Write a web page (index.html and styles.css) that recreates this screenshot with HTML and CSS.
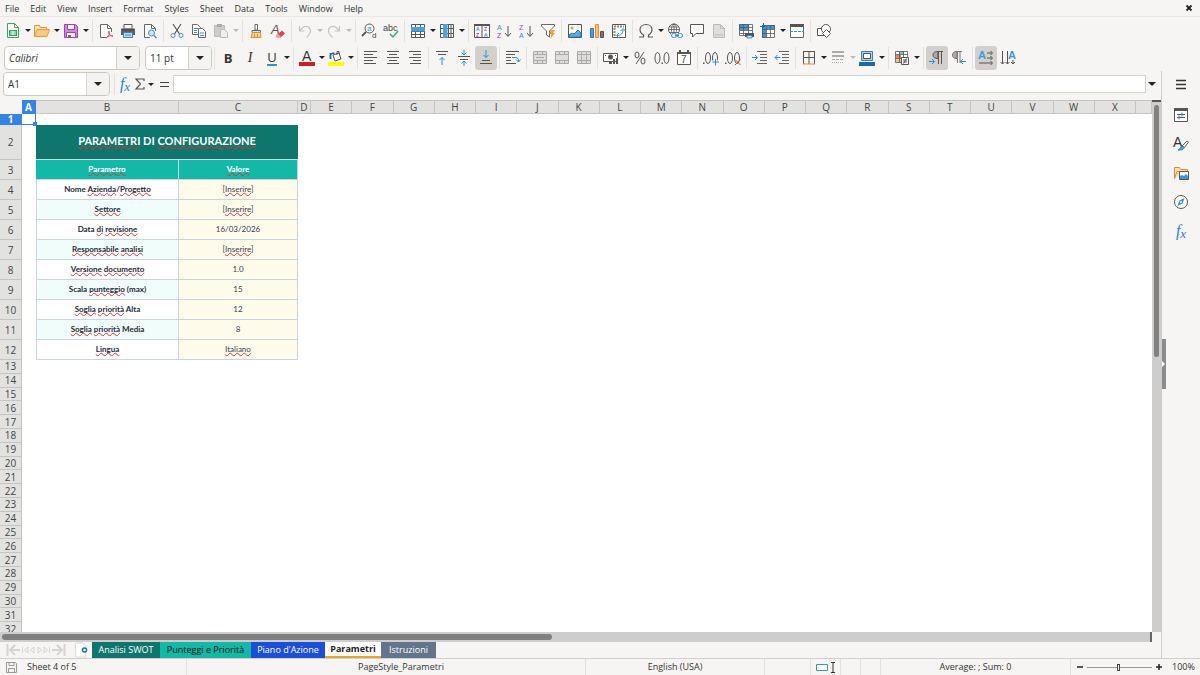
FILE: index.html
```html
<!DOCTYPE html>
<html lang="it">

<head>
    <meta charset="UTF-8">
    <meta name="viewport" content="width=device-width, initial-scale=1.0">
    <title>Parametri</title>
    <link rel="stylesheet" href="styles.css">
</head>

<body>
    <nav class="menubar">
        <button>File</button>
        <button>Edit</button>
        <button>View</button>
        <button>Insert</button>
        <button>Format</button>
        <button>Styles</button>
        <button>Sheet</button>
        <button>Data</button>
        <button>Tools</button>
        <button>Window</button>
        <button>Help</button>
        <button class="close" aria-label="Close"><svg width="8" height="8" viewBox="0 0 8 8"><path d="M1.500 1.500L6.500 6.500M6.500 1.500L1.500 6.500" stroke="#222" stroke-width="1.800"/></svg></button>
    </nav>

    <!-- Standard toolbar -->
    <div class="toolbar">
        <button class="tool" aria-label="New"><svg viewBox="0 0 16 16"><path d="M2.500.500h7l4 4v10h-11z" fill="#fff" stroke="#4a9b5f"/><path d="M9.500.500v4h4" fill="none" stroke="#4a9b5f"/><path d="M4 7h8v6H4z" fill="#2fa35b"/><path d="M5 9h6M5 11h6M8 8v4" stroke="#fff"/></svg></button>
        <button class="arrow" aria-label="New options"></button>
        <button class="tool" aria-label="Open"><svg viewBox="0 0 16 16"><path d="M.5 13.500v-11h5l1 2h6v2" fill="#fbe3b8" stroke="#e0953a"/><path d="M.5 13.500l2.500-7h12.500l-2.500 7z" fill="#f9c983" stroke="#e69a3e"/></svg></button>
        <button class="arrow" aria-label="Open options"></button>
        <button class="tool" aria-label="Save"><svg viewBox="0 0 16 16"><path d="M1.500 1.500h11l2 2v11h-13z" fill="#cf8ade" stroke="#9a45b0"/><path d="M4.500 1.500h7v5h-7zM3.500 9.500h9v5h-9z" fill="#fff" stroke="#9a45b0"/><path d="M5 12h3v2H5z" fill="#9a45b0"/></svg></button>
        <button class="arrow" aria-label="Save options"></button>
        <span class="sep"></span>
        <button class="tool" aria-label="Export as PDF"><svg viewBox="0 0 16 16"><path d="M9 14.500H2.500v-13h7l4 4V9" fill="#fff" stroke="#666"/><path d="M9.500 1.500v4h4" fill="none" stroke="#666"/><path d="M8 15c3-2 4-5 3-7-1 1 0 5 4 5-2-1-5 0-7 2z" fill="none" stroke="#e2485c"/></svg></button>
        <button class="tool" aria-label="Print"><svg viewBox="0 0 16 16"><path d="M4 1.500h8V6H4z" fill="#fff" stroke="#555"/><path d="M1 5.500h14v6.500H1z" fill="#5c6266"/><path d="M2 7h12" stroke="#444"/><path d="M3.500 9.500h9v5h-9z" fill="#bfe0f7" stroke="#357fbd"/><path d="M5 12h6" stroke="#357fbd"/></svg></button>
        <button class="tool" aria-label="Print preview"><svg viewBox="0 0 16 16"><path d="M8 14.500H2.500v-13h7l4 4V8" fill="#fff" stroke="#666"/><path d="M9.500 1.500v4h4" fill="none" stroke="#666"/><circle cx="9.500" cy="10" r="3" fill="#cfe7fa" stroke="#3b8fd4"/><path d="M12 12.500l2.500 2.500" stroke="#3b8fd4" stroke-width="1.500"/></svg></button>
        <span class="sep"></span>
        <button class="tool" aria-label="Cut"><svg viewBox="0 0 16 16"><path d="M4 1l6.500 10M12 1L5.500 11" stroke="#555" stroke-width="1.200"/><circle cx="4" cy="12.500" r="2" fill="#fff" stroke="#3b8fd4"/><circle cx="12" cy="12.500" r="2" fill="#fff" stroke="#3b8fd4"/></svg></button>
        <button class="tool" aria-label="Copy"><svg viewBox="0 0 16 16"><path d="M1.500 1.500h5l3 3v7h-8z" fill="#fff" stroke="#666"/><path d="M3 5.500h4M3 7.500h3M3 9.500h3" stroke="#3b8fd4"/><path d="M7.500 5.500h4l3 3v6h-7z" fill="#fff" stroke="#666"/><path d="M9 10h4M9 12.500h4" stroke="#3b8fd4"/></svg></button>
        <button class="tool" aria-label="Paste" disabled><svg viewBox="0 0 16 16"><path d="M1.500 2.500h10v11h-10z" fill="#ccc" stroke="#bbb"/><path d="M4 1h5v3H4z" fill="#aaa"/><path d="M7.500 6.500h4l3 3v5h-7z" fill="#eee" stroke="#bbb"/></svg></button>
        <button class="arrow dim" aria-label="Paste options" disabled></button>
        <span class="sep"></span>
        <button class="tool" aria-label="Clone formatting"><svg viewBox="0 0 16 16"><path d="M7 1.500h2.500V7H7z" fill="#fff" stroke="#666"/><path d="M4 7.500h8.500v2H4z" fill="#ddd" stroke="#666"/><path d="M4.500 9.500h8l.5 5H3z" fill="#fbd49c" stroke="#e08b2c"/><path d="M6.500 11v3M9.500 11v3" stroke="#e08b2c"/></svg></button>
        <button class="tool" aria-label="Clear formatting"><svg viewBox="0 0 16 16"><text x="1" y="11" font-size="13" font-style="italic" fill="#555">A</text><path d="M6 12.500l6-5 3 3-5 4.500H7z" fill="#e0444f"/><path d="M6 12.500l2-1.500 3 3-1 1H7z" fill="#f6a3a8"/></svg></button>
        <span class="sep"></span>
        <button class="tool" aria-label="Undo" disabled><svg viewBox="0 0 16 16"><path d="M2.500 3v5h5M2.500 8L6 4.500C9 2 13.500 4 13.500 8c0 2-1.500 4-4 6.500" fill="none" stroke="#c4c4c4" stroke-width="1.200"/></svg></button>
        <button class="arrow dim" aria-label="Undo steps" disabled></button>
        <button class="tool" aria-label="Redo" disabled><svg viewBox="0 0 16 16"><path d="M13.500 3v5h-5M13.500 8L10 4.500C7 2 2.500 4 2.500 8c0 2 1.500 4 4 6.500" fill="none" stroke="#c4c4c4" stroke-width="1.200"/></svg></button>
        <button class="arrow dim" aria-label="Redo steps" disabled></button>
        <span class="sep"></span>
        <button class="tool" aria-label="Find and replace"><svg viewBox="0 0 16 16"><circle cx="8.500" cy="5.500" r="4.500" fill="#fff" stroke="#555"/><path d="M5 9l-4 4" stroke="#555" stroke-width="1.800"/><text x="6" y="8" font-size="8" fill="#2b8fd8">a</text><text x="11" y="15" font-size="8" fill="#444">d</text></svg></button>
        <button class="tool" aria-label="Spelling"><svg viewBox="0 0 16 16"><text x="0" y="8" font-size="9" fill="#444">abc</text><path d="M7 11l3 3 5-6" fill="none" stroke="#3fae6a" stroke-width="1.500"/></svg></button>
        <span class="sep"></span>
        <button class="tool" aria-label="Row"><svg viewBox="0 0 16 16"><path d="M1.500 1.500h13v13h-13z" fill="#fff"/><path d="M1.500 1.500h13v13h-13zM1.500 4.500h13M1.500 8.500h13M1.500 11.500h13M5.500 1.500v13M10.500 1.500v13" fill="none" stroke="#555"/><path d="M1 4h14v4.500H1z" fill="#4aa3e0"/></svg></button>
        <button class="arrow" aria-label="Row options"></button>
        <button class="tool" aria-label="Column"><svg viewBox="0 0 16 16"><path d="M1.500 1.500h13v13h-13z" fill="#fff"/><path d="M1.500 1.500h13v13h-13zM1.500 5.500h13M1.500 10.500h13M5.500 1.500v13M9.500 1.500v13M12 1.500v13" fill="none" stroke="#555"/><path d="M4 1h4.500v14H4z" fill="#4aa3e0"/></svg></button>
        <button class="arrow" aria-label="Column options"></button>
        <span class="sep"></span>
        <button class="tool" aria-label="Sort"><svg viewBox="0 0 16 16"><path d="M.5 1.500h15v13H.5zM8 2v12" fill="#fff" stroke="#555"/><path d="M0 1h16v2H0z" fill="#555"/><g font-size="5" font-weight="bold"><text x="2" y="8" fill="#2b8fd8">A</text><text x="2" y="14" fill="#a83fc0">Z</text><text x="10" y="8" fill="#a83fc0">Z</text><text x="10" y="14" fill="#2b8fd8">A</text></g></svg></button>
        <button class="tool" aria-label="Sort ascending"><svg viewBox="0 0 16 16"><text x="1" y="7" font-size="7" fill="#2b8fd8">A</text><text x="1" y="15" font-size="7" fill="#a83fc0">Z</text><path d="M12 3v10M9 10l3 3.500 3-3.500" fill="none" stroke="#555"/></svg></button>
        <button class="tool" aria-label="Sort descending"><svg viewBox="0 0 16 16"><text x="1" y="7" font-size="7" fill="#a83fc0">Z</text><text x="1" y="15" font-size="7" fill="#2b8fd8">A</text><path d="M12 3v10M9 10l3 3.500 3-3.500" fill="none" stroke="#555"/></svg></button>
        <button class="tool" aria-label="AutoFilter"><svg viewBox="0 0 16 16"><path d="M1.500 1.500h13v1.500L9.500 8v6l-3-2V8l-5-5z" fill="#fff" stroke="#666"/><path d="M11 7h4l-2 3h2l-5 6 1.500-5H9z" fill="#f09a36"/></svg></button>
        <span class="sep"></span>
        <button class="tool" aria-label="Insert image"><svg viewBox="0 0 16 16"><path d="M1.500 1.500h13v13h-13z" fill="#fff" stroke="#555"/><circle cx="5" cy="5" r="1.500" fill="#f09a36"/><path d="M2 14v-2l3-2 2 1 4-4 3 3v4z" fill="#5aaae6" stroke="#2b77b8"/></svg></button>
        <button class="tool" aria-label="Insert chart"><svg viewBox="0 0 16 16"><path d="M1.500 5.500h3v9h-3z" fill="#4aa3e0" stroke="#2b77b8"/><path d="M6.500 1.500h3v13h-3z" fill="#fbc47c" stroke="#e08b2c"/><path d="M11.500 8.500h3v6h-3z" fill="#777" stroke="#555"/></svg></button>
        <button class="tool" aria-label="Pivot table"><svg viewBox="0 0 16 16"><path d="M1.500 1.500h13v13h-13z" fill="#fff" stroke="#555"/><path d="M3 3.500h10M3.500 5v8" stroke="#888" stroke-width="2" stroke-dasharray="2 1"/><path d="M6 12.500c4 0 6-2 6-6M8 10l-2.500 2.500L8 15M9.500 8L12 5.500 14.500 8" fill="none" stroke="#2b8fd8"/></svg></button>
        <span class="sep"></span>
        <button class="tool" aria-label="Special character"><svg viewBox="0 0 16 16"><path d="M1 14h4.500v-2C3 10.500 2 8.500 2 6.500 2 3.500 4.500 1.500 8 1.500s6 2 6 5c0 2-1 4-3.500 5.500v2H15" fill="none" stroke="#555" stroke-width="1.200"/></svg></button>
        <button class="arrow" aria-label="Character list"></button>
        <button class="tool" aria-label="Hyperlink"><svg viewBox="0 0 16 16"><circle cx="7" cy="6.500" r="5.500" fill="#fff" stroke="#555"/><path d="M7 1v11M1.500 6.500h11M2.500 4h9M2.500 9.500h9" stroke="#555" stroke-width=".8"/><ellipse cx="7" cy="6.500" rx="2.500" ry="5.500" fill="none" stroke="#555" stroke-width=".8"/><path d="M4 10h12v5H4z" fill="#f6f5f4"/><rect x="4.500" y="10.500" width="5" height="4" rx="2" fill="none" stroke="#2b8fd8"/><rect x="10.500" y="10.500" width="5" height="4" rx="2" fill="none" stroke="#2b8fd8"/><path d="M8 12.500h4" stroke="#2b8fd8"/></svg></button>
        <button class="tool" aria-label="Comment"><svg viewBox="0 0 16 16"><path d="M1.500 1.500h13v9H7L3.500 14v-3.500h-2z" fill="#fff" stroke="#555"/></svg></button>
        <button class="tool" aria-label="Headers and footers" disabled><svg viewBox="0 0 16 16"><path d="M2.500 1.500h7l4 4v9h-11z" fill="#ddd" stroke="#bbb"/><path d="M9.500 1.500v4h4M4 12h8" fill="none" stroke="#bbb"/></svg></button>
        <span class="sep"></span>
        <button class="tool" aria-label="Define print area"><svg viewBox="0 0 16 16"><path d="M1.500 1.500h13v11h-13z" fill="#fff"/><path d="M1 1h10v6H1z" fill="#3f95d8"/><path d="M1.500 1.500h13v11h-13zM1.500 4.500h13M1.500 7.500h13M1.500 10.500h13M5.500 1.500v11M10.500 1.500v11" fill="none" stroke="#555" stroke-width=".8"/><path d="M7 10h9v4H7z" fill="#555"/><path d="M9 12.500h5V15H9z" fill="#cfe7fa" stroke="#357fbd" stroke-width=".8"/></svg></button>
        <button class="tool" aria-label="Freeze rows and columns"><svg viewBox="0 0 16 16"><path d="M2.500 2.500h12v12h-12z" fill="#fff"/><path d="M2 2h13v4H2zM2 2h4v13H2z" fill="#3f95d8"/><path d="M2.500 2.500h12v12h-12zM6.500 2.500v12M10.500 2.500v12M2.500 6.500h12M2.500 10.500h12" fill="none" stroke="#555" stroke-width=".8"/><path d="M3.500 0v5M0 3.500h5" stroke="#2067a8"/></svg></button>
        <button class="arrow" aria-label="Freeze options"></button>
        <button class="tool" aria-label="Split window"><svg viewBox="0 0 16 16"><path d="M1.500 2.500h13v12h-13z" fill="#fff" stroke="#666"/><path d="M1 1h14v3H1z" fill="#555"/><path d="M1 8.500h14" stroke="#2b8fd8" stroke-dasharray="3 1"/></svg></button>
        <span class="sep"></span>
        <button class="tool" aria-label="Draw functions"><svg viewBox="0 0 16 16"><path d="M1.500 5.500h7v7h-7z" fill="#fff" stroke="#555"/><circle cx="10" cy="6" r="4.500" fill="#fff" stroke="#555"/><path d="M10.500 6.500l4 4-4 4-4-4z" fill="#fff" stroke="#555"/></svg></button>
    </div>

    <!-- Formatting toolbar -->
    <div class="toolbar">
        <div class="combo font-name">
            <input type="text" value="Calibri" aria-label="Font name">
            <button aria-label="Font list"></button>
        </div>
        <div class="combo font-size">
            <input type="text" value="11 pt" aria-label="Font size">
            <button aria-label="Size list"></button>
        </div>
        <span class="sep"></span>
        <button class="tool letter"><b>B</b></button>
        <button class="tool letter serif"><i>I</i></button>
        <button class="tool letter underlined"><span>U</span></button>
        <button class="arrow" aria-label="Underline options"></button>
        <span class="sep"></span>
        <button class="tool" aria-label="Font color"><svg viewBox="0 0 16 16"><text x="3" y="11" font-size="14" fill="#333">A</text><path d="M0 12h16v4H0z" fill="#c9211e"/></svg></button>
        <button class="arrow" aria-label="Font color options"></button>
        <button class="tool" aria-label="Background color"><svg viewBox="0 0 16 16"><path d="M5 5l6-2 2 6-6 2z" fill="#fff" stroke="#555"/><path d="M9 5V1.500h2V4" fill="none" stroke="#555"/><path d="M2.500 9V4l4-1" fill="none" stroke="#2067a8" stroke-width="1.800"/><path d="M0 12h16v4H0z" fill="#ff0"/></svg></button>
        <button class="arrow" aria-label="Background color options"></button>
        <span class="sep"></span>
        <button class="tool" aria-label="Align left"><svg viewBox="0 0 16 16"><path d="M1 1.500h13M1 4.500h9M1 7.500h13M1 10.500h9M1 13.500h12" stroke="#555"/></svg></button>
        <button class="tool" aria-label="Align center"><svg viewBox="0 0 16 16"><path d="M2 1.500h12M4 4.500h8M2 7.500h12M4 10.500h8M2 13.500h12" stroke="#555"/></svg></button>
        <button class="tool" aria-label="Align right"><svg viewBox="0 0 16 16"><path d="M2 1.500h12M6 4.500h8M2 7.500h12M6 10.500h8M3 13.500h11" stroke="#555"/></svg></button>
        <span class="sep"></span>
        <button class="tool" aria-label="Align top"><svg viewBox="0 0 16 16"><path d="M2 1.500h12M4 4.500h8" stroke="#555"/><path d="M8 15V7.500M5.500 10L8 7.500l2.500 2.500" fill="none" stroke="#2b8fd8"/></svg></button>
        <button class="tool" aria-label="Center vertically"><svg viewBox="0 0 16 16"><path d="M2 6.500h12M4 9.500h8" stroke="#555"/><path d="M8 0v5M5.500 2.500L8 5l2.500-2.500M8 16v-5M5.500 13.500L8 11l2.500 2.500" fill="none" stroke="#2b8fd8"/></svg></button>
        <button class="tool active" aria-label="Align bottom"><svg viewBox="0 0 16 16"><path d="M4 10.500h8M2 13.500h12" stroke="#555"/><path d="M8 0v7.500M5.500 5L8 7.500 10.500 5" fill="none" stroke="#2b8fd8"/></svg></button>
        <span class="sep"></span>
        <button class="tool" aria-label="Wrap text"><svg viewBox="0 0 16 16"><path d="M1 1.500h13M1 4.500h9M1 7.500h5M1 10.500h5M1 13.500h10" stroke="#555"/><path d="M7 7.500h3.500c2 0 3 1 3 3.500M11 9.500l2.500 2.500L15.500 9.500" fill="none" stroke="#2b8fd8"/></svg></button>
        <span class="sep"></span>
        <button class="tool" aria-label="Merge and center" disabled><svg viewBox="0 0 16 16"><path d="M1.500 1.500h13v12h-13zM1.500 4.500h13M1.500 10.500h13M5.500 1.500v3M10.500 1.500v3M5.500 10.500v3M10.500 10.500v3M4 7.500h8" fill="#ddd" stroke="#aaa"/></svg></button>
        <button class="tool" aria-label="Merge cells" disabled><svg viewBox="0 0 16 16"><path d="M1.500 1.500h13v12h-13zM1.500 4.500h13M1.500 10.500h13M5.500 1.500v3M10.500 1.500v3M5.500 10.500v3M10.500 10.500v3" fill="#ddd" stroke="#aaa"/></svg></button>
        <button class="tool" aria-label="Unmerge cells" disabled><svg viewBox="0 0 16 16"><path d="M1.500 1.500h13v12h-13zM1.500 4.500h13M1.500 10.500h13M5.500 1.500v12M10.500 1.500v12" fill="#ddd" stroke="#aaa"/></svg></button>
        <span class="sep"></span>
        <button class="tool" aria-label="Currency"><svg viewBox="0 0 16 16"><path d="M.5 3.500h14v8H.5z" fill="#fff" stroke="#555"/><circle cx="7.500" cy="7" r="2.500" fill="#555"/><path d="M6 11h3v3H6zM10 9h2v5h-2zM13 8h2v6h-2z" fill="#555"/><path d="M2 5.500h1M12 5.500h1" stroke="#555"/></svg></button>
        <button class="arrow" aria-label="Currency options"></button>
        <button class="tool" aria-label="Percent"><svg viewBox="0 0 16 16"><ellipse cx="5" cy="5" rx="2" ry="3" fill="none" stroke="#555"/><ellipse cx="11" cy="11" rx="2" ry="3" fill="none" stroke="#555"/><path d="M12 2L4 14" stroke="#555"/></svg></button>
        <button class="tool" aria-label="Number"><svg viewBox="0 0 16 16"><ellipse cx="3.500" cy="8" rx="2.500" ry="5.500" fill="none" stroke="#555"/><ellipse cx="12.500" cy="8" rx="2.500" ry="5.500" fill="none" stroke="#555"/><path d="M7.500 12.500h1.500v1.500H7.500z" fill="#555"/></svg></button>
        <button class="tool" aria-label="Date"><svg viewBox="0 0 16 16"><path d="M1.500 2.500h13v12h-13z" fill="#fff" stroke="#555"/><path d="M1 2h14v2H1zM3 0h2v3H3zM11 0h2v3h-2z" fill="#555"/><text x="5" y="13" font-size="10" fill="#444">7</text></svg></button>
        <span class="sep"></span>
        <button class="tool" aria-label="Add decimal place"><svg viewBox="0 0 16 16"><path d="M0 12.500h1.500V14H0z" fill="#555"/><ellipse cx="5" cy="8" rx="2.500" ry="5.500" fill="none" stroke="#555"/><ellipse cx="12" cy="8" rx="2.500" ry="5.500" fill="none" stroke="#555"/><path d="M9 12h7M12.500 8.500v7" stroke="#f6f5f4" stroke-width="3"/><path d="M9.500 12h6.500M12.500 9v6.500" stroke="#2b8fd8"/></svg></button>
        <button class="tool" aria-label="Delete decimal place"><svg viewBox="0 0 16 16"><path d="M0 12.500h1.500V14H0z" fill="#555"/><ellipse cx="5" cy="8" rx="2.500" ry="5.500" fill="none" stroke="#555"/><ellipse cx="12" cy="8" rx="2.500" ry="5.500" fill="none" stroke="#555"/><path d="M10 9.500l5.500 5.500M15.500 9.500L10 15" stroke="#e2483c"/></svg></button>
        <span class="sep"></span>
        <button class="tool" aria-label="Increase indent"><svg viewBox="0 0 16 16"><path d="M5 1.500h10M8 4.500h7M8 7.500h7M8 10.500h7M5 13.500h10" stroke="#666"/><path d="M0 7.500h5.500M3 5l2.500 2.500L3 10" fill="none" stroke="#2b8fd8"/></svg></button>
        <button class="tool" aria-label="Decrease indent"><svg viewBox="0 0 16 16"><path d="M5 1.500h10M8 4.500h7M8 7.500h7M8 10.500h7M5 13.500h10" stroke="#666"/><path d="M6.500 7.500H1M3.500 5L1 7.500 3.500 10" fill="none" stroke="#2b8fd8"/></svg></button>
        <span class="sep"></span>
        <button class="tool" aria-label="Borders"><svg viewBox="0 0 16 16"><path d="M2 1.500h12M2.500 2v12M13.500 2v12M8 2v12M2 7.500h12" stroke="#555" fill="none"/><path d="M2 14h12" stroke="#e08b2c"/></svg></button>
        <button class="arrow" aria-label="Border options"></button>
        <button class="tool" aria-label="Border style" disabled><svg viewBox="0 0 16 16"><path d="M2 2h12M2 6h12" stroke="#aaa" stroke-width="2"/><path d="M2 9.500h12" stroke="#aaa" stroke-dasharray="3 1"/><path d="M2 12.500h12" stroke="#aaa" stroke-dasharray="1 1"/></svg></button>
        <button class="arrow dim" aria-label="Border style options" disabled></button>
        <button class="tool" aria-label="Border color"><svg viewBox="0 0 16 16"><path d="M2.500 1.500h11v9h-11z" fill="#a8d0f0" stroke="#357fbd"/><path d="M4.500 3.500h7v5h-7z" fill="#fff" stroke="#555"/><path d="M0 12h16v4H0z" fill="#2067a8"/></svg></button>
        <button class="arrow" aria-label="Border color options"></button>
        <span class="sep"></span>
        <button class="tool" aria-label="Conditional formatting"><svg viewBox="0 0 16 16"><path d="M1.500 1.500h12v11h-12z" fill="#fff"/><path d="M5 1h5v3H5z" fill="#7ccf95"/><path d="M2 5h5v3H2z" fill="#ef7b7b"/><path d="M2 9h5v3H2z" fill="#f9c983"/><path d="M1.500 1.500h12v11h-12zM5.500 1.500v11M9.500 1.500v11M1.500 4.500h12M1.500 8.500h12" fill="none" stroke="#555" stroke-width=".8"/><path d="M7.500 7.500h7v7h-7z" fill="#fff" stroke="#555"/><path d="M9 10h4M9 12h4M12.500 8.500l-3 5" stroke="#555"/></svg></button>
        <button class="arrow" aria-label="Conditional options"></button>
        <span class="sep"></span>
        <button class="tool active" aria-label="Left to right"><svg viewBox="0 0 16 16"><path d="M14 1.500H8.500M9.500 1v13M12.500 1v13" fill="none" stroke="#555"/><path d="M9 1.500C6 1.500 4 2.500 4 5s2 3.500 5 3.500z" fill="#aaa" stroke="#555"/><path d="M0 11.500h5.500M3 9l2.500 2.500L3 14" fill="none" stroke="#2b8fd8"/></svg></button>
        <button class="tool" aria-label="Right to left"><svg viewBox="0 0 16 16"><path d="M11 1.500H5.500M6.500 1v12M9 1v12" fill="none" stroke="#777"/><path d="M6 1.500C3 1.500 1.500 2.500 1.500 5S3 8.500 6 8.500z" fill="#aaa" stroke="#777"/><path d="M15 11.500H9.500M12 9l-2.500 2.500L12 14" fill="none" stroke="#2b8fd8"/></svg></button>
        <span class="sep"></span>
        <button class="tool active" aria-label="Horizontal text"><svg viewBox="0 0 16 16"><text x="0" y="9" font-size="11" font-weight="bold" fill="#3b9bdc">A</text><path d="M9 3h5M9 8h5M1 13h13M12.500 1l2 2-2 2M12.500 6l2 2-2 2M12.500 11l2 2-2 2" fill="none" stroke="#555"/></svg></button>
        <button class="tool" aria-label="Vertical text"><svg viewBox="0 0 16 16"><text x="8" y="9" font-size="11" font-weight="bold" fill="#3b9bdc">A</text><path d="M2.500 1v13M7.500 1v13M13 10v4M.5 12l2 2 2-2M5.500 12l2 2 2-2M11 12l2 2 2-2" fill="none" stroke="#555"/></svg></button>
    </div>

    <div class="workspace">
        <main>
            <div class="formula-bar">
                <div class="combo name-box">
                    <input type="text" value="A1" aria-label="Name box">
                    <button aria-label="Named ranges"></button>
                </div>
                <span class="sep"></span>
                <button class="fx" aria-label="Function wizard">f<sub>x</sub></button>
                <button class="sum" aria-label="Select function"><svg width="10" height="12" viewBox="0 0 10 12"><path d="M9 3V1H1l4.500 5L1 11h8V9" fill="none" stroke="#555" stroke-width="1.200"/></svg></button>
                <button class="arrow" aria-label="Function list"></button>
                <button class="equals" aria-label="Formula"></button>
                <input class="formula" type="text" aria-label="Formula input">
                <button class="arrow expand" aria-label="Expand formula bar"></button>
            </div>

            <div class="sheet-area">
                <div class="sheet">
                    <table>
                        <colgroup>
                            <col class="w-head"><col class="w-a"><col class="w-b"><col class="w-c"><col class="w-d">
                            <col span="20">
                            <col class="w-last">
                        </colgroup>
                        <thead>
                            <tr>
                                <td></td><th class="selected">A</th><th>B</th><th>C</th><th>D</th><th>E</th><th>F</th><th>G</th><th>H</th><th>I</th><th>J</th><th>K</th><th>L</th><th>M</th><th>N</th><th>O</th><th>P</th><th>Q</th><th>R</th><th>S</th><th>T</th><th>U</th><th>V</th><th>W</th><th>X</th><th></th>
                            </tr>
                        </thead>
                        <tbody>
                            <tr class="row-1"><th class="selected">1</th><td class="cursor"></td><td colspan="24"></td></tr>
                            <tr class="row-2"><th>2</th><td></td><td class="title" colspan="2"><u>PARAMETRI</u> DI <u>CONFIGURAZIONE</u></td></tr>
                            <tr class="data head"><th>3</th><td></td><td><u>Parametro</u></td><td><u>Valore</u></td></tr>
                            <tr class="data"><th>4</th><td></td><td class="label">Nome <u>Azienda</u>/<u>Progetto</u></td><td class="value">[<u>Inserire</u>]</td></tr>
                            <tr class="data alt"><th>5</th><td></td><td class="label"><u>Settore</u></td><td class="value">[<u>Inserire</u>]</td></tr>
                            <tr class="data"><th>6</th><td></td><td class="label">Data <u>di</u> <u>revisione</u></td><td class="value">16/03/2026</td></tr>
                            <tr class="data alt"><th>7</th><td></td><td class="label"><u>Responsabile</u> <u>analisi</u></td><td class="value">[<u>Inserire</u>]</td></tr>
                            <tr class="data"><th>8</th><td></td><td class="label"><u>Versione</u> <u>documento</u></td><td class="value">1.0</td></tr>
                            <tr class="data alt"><th>9</th><td></td><td class="label">Scala <u>punteggio</u> (max)</td><td class="value">15</td></tr>
                            <tr class="data"><th>10</th><td></td><td class="label"><u>Soglia</u> <u>priorità</u> Alta</td><td class="value">12</td></tr>
                            <tr class="data alt"><th>11</th><td></td><td class="label"><u>Soglia</u> <u>priorità</u> Media</td><td class="value">8</td></tr>
                            <tr class="data"><th>12</th><td></td><td class="label"><u>Lingua</u></td><td class="value"><u>Italiano</u></td></tr>
                            <tr><th>13</th></tr>
                            <tr><th>14</th></tr>
                            <tr><th>15</th></tr>
                            <tr><th>16</th></tr>
                            <tr><th>17</th></tr>
                            <tr><th>18</th></tr>
                            <tr><th>19</th></tr>
                            <tr><th>20</th></tr>
                            <tr><th>21</th></tr>
                            <tr><th>22</th></tr>
                            <tr><th>23</th></tr>
                            <tr><th>24</th></tr>
                            <tr><th>25</th></tr>
                            <tr><th>26</th></tr>
                            <tr><th>27</th></tr>
                            <tr><th>28</th></tr>
                            <tr><th>29</th></tr>
                            <tr><th>30</th></tr>
                            <tr><th>31</th></tr>
                            <tr><th>32</th></tr>
                        </tbody>
                    </table>
                </div>
                <div class="vscroll"><div class="thumb"></div></div>
            </div>

            <div class="hscroll"><div class="thumb"></div></div>

            <div class="tabs">
                <div class="tab-nav">
                    <button aria-label="First sheet"><svg width="15" height="12" viewBox="0 0 15 12"><path d="M1.500 0v12M9 1L4 6l5 5M4 6h10" fill="none" stroke="#d4d4d4" stroke-width="2"/></svg></button>
                    <button aria-label="Previous sheet"><svg width="15" height="12" viewBox="0 0 15 12"><path d="M1.500 3v6M7 3L3.500 6 7 9zM13 3L9.500 6 13 9z" fill="none" stroke="#d4d4d4"/></svg></button>
                    <button aria-label="Next sheet"><svg width="15" height="12" viewBox="0 0 15 12"><path d="M13.500 3v6M2 3l3.500 3L2 9zM8 3l3.500 3L8 9z" fill="none" stroke="#d4d4d4"/></svg></button>
                    <button aria-label="Last sheet"><svg width="15" height="12" viewBox="0 0 15 12"><path d="M13.500 0v12M6 1l5 5-5 5M11 6H1" fill="none" stroke="#d4d4d4" stroke-width="2"/></svg></button>
                </div>
                <button class="add" aria-label="Add sheet"><svg width="14" height="14" viewBox="0 0 14 14"><path d="M1.500 0h7l3 3v11h-10z" fill="#fff" stroke="#ddd"/><circle cx="10.500" cy="7" r="2" fill="#fff" stroke="#2067a8" stroke-width="1.500"/></svg></button>
                <button class="tab swot">Analisi SWOT</button>
                <button class="tab scores">Punteggi e Priorità</button>
                <button class="tab plan">Piano d'Azione</button>
                <button class="tab current">Parametri</button>
                <button class="tab help">Istruzioni</button>
            </div>
        </main>

        <aside class="sidebar">
            <button class="grip" aria-label="Hide sidebar"></button>
            <button aria-label="Sidebar settings"><svg viewBox="0 0 16 16"><path d="M3 4.500h10M3 8.500h10M3 12.500h10" stroke="#333" stroke-width="1.500"/></svg></button>
            <button aria-label="Properties"><svg viewBox="0 0 16 16"><path d="M1.500 1.500h13v13h-13z" fill="#fff" stroke="#555"/><path d="M1 1h14v3H1z" fill="#555"/><path d="M4 7.500h8M4 10.500h8" stroke="#555"/><path d="M9 5.500v4M6 8.500v4" stroke="#2b8fd8"/></svg></button>
            <button aria-label="Styles"><svg viewBox="0 0 16 16"><text x="0" y="11" font-size="14" fill="#333">A</text><path d="M9 10l5-5 1.500 1-4 5.500z" fill="#fff" stroke="#666"/><path d="M5 14c2 0 2-4 5-3.500 2 1 1 4-5 3.500z" fill="#5aaae6" stroke="#2b77b8"/></svg></button>
            <button aria-label="Gallery"><svg viewBox="0 0 16 16"><path d="M1.500 13.500v-11h5l1 2h7v2M1.500 13.500l2.500-7h11" fill="#fbe3b8" stroke="#e0853a"/><path d="M6.500 6.500h9v8h-9z" fill="#fff" stroke="#555"/><path d="M7 14v-3l2-1 2 1 2-2 2 2v3z" fill="#3f95d8"/></svg></button>
            <button aria-label="Navigator"><svg viewBox="0 0 16 16"><circle cx="8" cy="8" r="6.500" fill="#fff" stroke="#555"/><path d="M11.500 4l-2 5.500L4.500 12l2-5.500z" fill="#2b8fd8"/><circle cx="8" cy="8" r="1" fill="#fff"/></svg></button>
            <button class="fx" aria-label="Functions">f<sub>x</sub></button>
        </aside>
    </div>

    <footer class="statusbar">
        <div class="sheet-count"><svg width="11" height="11" viewBox="0 0 11 11"><path d="M.5.5h9l1 1v9H.5zM3 .5h5v3H3zM2.500 6.500h6v4h-6z" fill="none" stroke="#999"/></svg>Sheet 4 of 5</div>
        <div class="page-style">PageStyle_Parametri</div>
        <div class="language">English (USA)</div>
        <div class="cell-s"></div>
        <div class="cell-m"><svg width="20" height="12" viewBox="0 0 20 12"><path d="M.5 3.500h11v6H.5z" fill="#fff" stroke="#3b8fd4"/><path d="M15 1.500h4M15 11.500h4M17 1.500v10" stroke="#333"/></svg></div>
        <div class="cell-xs"></div>
        <div class="cell-xs"></div>
        <div class="stats">Average: ; Sum: 0</div>
        <div class="zoom">
            <button aria-label="Zoom out"><svg width="8" height="8" viewBox="0 0 8 8"><path d="M1 4h6" stroke="#222" stroke-width="1.500"/></svg></button>
            <input type="range" min="0" max="100" value="48" aria-label="Zoom">
            <button aria-label="Zoom in"><svg width="8" height="8" viewBox="0 0 8 8"><path d="M1 4h6M4 1v6" stroke="#222" stroke-width="1.500"/></svg></button>
            <span>100%</span>
        </div>
    </footer>
</body>

</html>
```

FILE: styles.css
```css
* {
    box-sizing: border-box;
}

body {
    display: flex;
    flex-direction: column;
    height: 100vh;
    margin: 0;
    overflow: hidden;
    background-color: #f6f5f4;
    color: #333;
    font-family: "Open Sans", "Noto Sans", sans-serif;
    font-size: 9px;
}

button,
input {
    margin: 0;
    padding: 0;
    border: none;
    background: none;
    color: inherit;
    font: inherit;
    white-space: nowrap;
}

svg {
    display: block;
    overflow: visible;
    font-family: "Liberation Sans", sans-serif;
}

/* Menu */
.menubar {
    display: flex;
    align-items: center;
    gap: 11px;
    height: 17px;
    padding: 0 5px;
    border-bottom: 1px solid #e8e7e6;
}

.close {
    margin-left: auto;
    padding-right: 2px;
}

/* Toolbars */
.toolbar {
    display: flex;
    align-items: center;
    height: 27px;
    padding-left: 2px;
}

.toolbar .combo {
    margin-left: 2px;
}

.tool {
    display: flex;
    align-items: center;
    justify-content: center;
    width: 22px;
    height: 24px;
    border-radius: 3px;
}

.tool svg,
.sidebar svg {
    width: 16px;
    height: 16px;
}

.tool.active {
    background-color: #d3d0cc;
}

.letter {
    font-size: 13px;
}

.serif {
    font-family: "Liberation Serif", serif;
    font-size: 14px;
}

.underlined span {
    line-height: 14px;
    border-bottom: 2px solid #3b8fd4;
}

.arrow {
    display: flex;
    align-items: center;
    justify-content: center;
    width: 7px;
    height: 24px;
}

.arrow::before,
.combo button::before {
    content: "";
    border: 3px solid transparent;
    border-top-color: #222;
    border-bottom: none;
}

.arrow.dim::before {
    border-top-color: #bbb;
}

.combo button::before,
.expand::before {
    border-width: 4px;
    border-bottom: none;
}

.sep {
    width: 1px;
    height: 22px;
    margin: 0 2px;
    background-color: #e2e1df;
}

.arrow + .sep {
    margin-left: 3px;
}

.combo {
    display: flex;
    height: 24px;
    border: 1px solid #cdc7c2;
    border-radius: 4px;
    background-color: #fff;
    overflow: hidden;
}

.combo input {
    flex: 1;
    min-width: 0;
    padding-left: 4px;
    font-size: 10px;
}

.combo button {
    display: flex;
    align-items: center;
    justify-content: center;
    width: 23px;
    border-left: 1px solid #d8d4d0;
    background-color: #f4f3f2;
}

.font-name {
    width: 136px;
}

.font-name input {
    font-style: italic;
}

.toolbar .font-size {
    width: 67px;
    margin-left: 5px;
}

/* Workspace */
.workspace {
    display: flex;
    flex: 1;
    min-height: 0;
}

main {
    display: flex;
    flex: 1;
    flex-direction: column;
    min-width: 0;
}

.formula-bar {
    display: flex;
    align-items: center;
    height: 29px;
    padding: 0 3px 3px;
}

.name-box {
    width: 107px;
    margin-right: 2px;
}

.fx {
    color: #2b83cc;
    font-family: "Liberation Serif", serif;
    font-size: 16px;
    font-style: italic;
    line-height: 16px;
}

.fx sub {
    font-size: 13px;
    line-height: 0;
    vertical-align: -2px;
}

.formula-bar .fx {
    width: 16px;
}

.sum {
    width: 14px;
    padding-left: 2px;
}

.equals {
    width: 9px;
    height: 5px;
    margin: 0 4px 0 6px;
    border: solid #444;
    border-width: 1px 0;
}

.formula {
    flex: 1;
    height: 18px;
    border: 1px solid #d5d1cd;
    background-color: #fff;
}

.expand {
    width: 12px;
}

.sheet-area {
    display: flex;
    flex: 1;
    min-height: 0;
}

.sheet {
    flex: 1;
    overflow: hidden;
    background-color: #fff;
}

table {
    width: 100%;
    height: calc(100% + 4px);
    table-layout: fixed;
    border-collapse: separate;
    border-spacing: 0;
}

.w-head {
    width: 22px;
}

.w-a {
    width: 14px;
}

.w-b {
    width: 143px;
}

.w-c {
    width: 119px;
}

.w-d {
    width: 13px;
}

.w-last {
    width: 16px;
}

th,
td {
    padding: 0;
    text-align: center;
    white-space: nowrap;
    line-height: 12px;
}

th {
    border-right: 1px solid #c4c4c3;
    border-bottom: 1px solid #c4c4c3;
    background-color: #e2e2e1;
    color: #444;
    font-size: 10px;
    font-weight: normal;
}

thead tr {
    height: 14px;
}

thead th {
    border-top: 1px solid #c4c4c3;
}

thead td {
    background-color: #f6f5f4;
}

th.selected {
    border-color: #3584e4;
    background-color: #3584e4;
    color: #fff;
    font-weight: bold;
}

.row-1 {
    height: 11px;
}

.row-1 th {
    line-height: 10px;
}

.row-2 {
    height: 35px;
}

.data {
    height: 20px;
}

.cursor {
    position: relative;
    border-right: 1px solid #3584e4;
    border-bottom: 1px solid #3584e4;
}

.cursor::after {
    content: "";
    position: absolute;
    right: -2px;
    bottom: -2px;
    width: 4px;
    height: 4px;
    background-color: #3584e4;
}

td.title,
.head td,
.label,
.value {
    padding-bottom: 2px;
    font-family: Lato, sans-serif;
    font-size: 8px;
}

td.title {
    border-bottom: 1px solid #cbd5e1;
    background-color: #0f766e;
    color: #fff;
    font-size: 11px;
    font-weight: bold;
}

.head td:nth-child(n+3) {
    border-right: 1px solid #cbd5e1;
    border-bottom: 1px solid #cbd5e1;
    background-color: #14b8a6;
    color: #fff;
    font-weight: bold;
}

.label,
.value {
    border-right: 1px solid #cbd5e1;
    border-bottom: 1px solid #cbd5e1;
}

.label {
    border-left: 1px solid #cbd5e1;
    color: #1e293b;
    font-weight: bold;
}

.alt .label {
    background-color: #f0fdfa;
}

.value {
    background-color: #fffbeb;
    color: #334155;
}

/* Spelling marks */
u {
    text-decoration: underline wavy #e03030 1px;
    text-decoration-skip-ink: none;
    text-underline-offset: 0;
}

/* Scrollbars */
.vscroll {
    width: 9px;
    padding: 3px 2px;
    border-top: 2px solid #555;
    background-color: #cdcdcd;
}

.vscroll .thumb {
    height: 48%;
    border-radius: 3px;
    background-color: #808080;
}

.hscroll {
    height: 10px;
    margin-right: 9px;
    padding: 2px;
    border-right: 2px solid #666;
    background-color: #cdcdcd;
}

.hscroll .thumb {
    width: 48%;
    height: 6px;
    border-radius: 3px;
    background-color: #808080;
}

/* Sheet tabs */
.tabs {
    display: flex;
    height: 16px;
}

.tab-nav {
    display: flex;
    align-items: center;
    width: 74px;
    padding-left: 6px;
}

.add {
    width: 18px;
}

.tab {
    line-height: 14px;
    color: #fff;
}

.swot {
    width: 68px;
    background-color: #0f766e;
}

.scores {
    width: 91px;
    background-color: #14b8a6;
    color: #111;
}

.plan {
    width: 74px;
    background-color: #1d4ed8;
}

.current {
    width: 56px;
    border-bottom: 2px solid #e0a92e;
    background-color: #fff;
    color: #222;
    font-weight: bold;
}

.help {
    width: 55px;
    background-color: #64748b;
}

/* Sidebar */
.sidebar {
    position: relative;
    display: flex;
    flex-direction: column;
    gap: 13px;
    align-items: center;
    width: 39px;
    padding-top: 5px;
    border-left: 1px solid #cfcdcb;
}

.sidebar button:nth-child(2) {
    margin-bottom: 2px;
}

.grip {
    position: absolute;
    top: 268px;
    left: 0;
    width: 4px;
    height: 50px;
    background-color: #8c8c8c;
}

.grip::before {
    content: "";
    display: block;
    width: 3px;
    border: 3px solid transparent;
    border-left-color: #fff;
    border-right: none;
}

/* Status bar */
.statusbar {
    display: flex;
    height: 17px;
    border-top: 1px solid #d2d0ce;
    line-height: 16px;
}

.statusbar > div {
    border-right: 1px solid #e2e1df;
    text-align: center;
}

.statusbar .sheet-count {
    display: flex;
    align-items: center;
    gap: 10px;
    width: 187px;
    padding-left: 6px;
}

.statusbar .page-style {
    flex: 1;
    padding-left: 171px;
    text-align: left;
}

.language {
    width: 179px;
}

.cell-s {
    width: 46px;
}

.cell-m {
    width: 30px;
    padding: 2px 0 0 5px;
}

.cell-xs {
    width: 20px;
}

.stats {
    width: 190px;
}

.statusbar .zoom {
    display: flex;
    align-items: center;
    gap: 3px;
    width: 129px;
    padding-left: 5px;
    border-right: none;
}

.zoom span {
    margin-left: 6px;
}

.zoom input {
    width: 65px;
    height: 8px;
    appearance: none;
    background: linear-gradient(#999, #999) center / 100% 1px no-repeat;
}

.zoom input::-webkit-slider-thumb {
    appearance: none;
    width: 3px;
    height: 7px;
    border: 1px solid #444;
    background-color: #fff;
}
```
